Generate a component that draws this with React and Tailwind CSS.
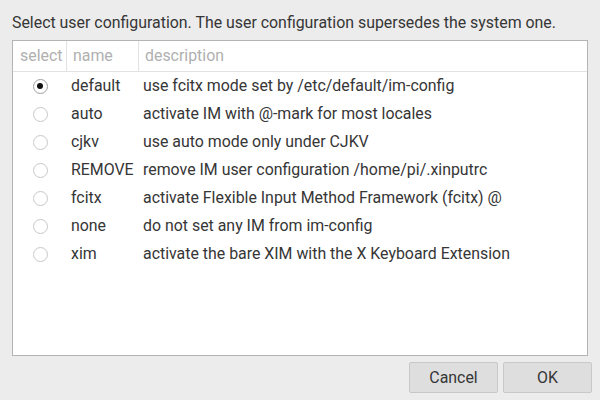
const rows = [
  { name: 'default', desc: 'use fcitx mode set by /etc/default/im-config', checked: true },
  { name: 'auto', desc: 'activate IM with @-mark for most locales' },
  { name: 'cjkv', desc: 'use auto mode only under CJKV' },
  { name: 'REMOVE', desc: 'remove IM user configuration /home/pi/.xinputrc' },
  { name: 'fcitx', desc: 'activate Flexible Input Method Framework (fcitx) @' },
  { name: 'none', desc: 'do not set any IM from im-config' },
  { name: 'xim', desc: 'activate the bare XIM with the X Keyboard Extension' }
];

const Radio = ({ checked }) => (
  <span
    className={`w-[15px] h-[15px] rounded-full bg-white border flex items-center justify-center ${
      checked ? 'border-[#a0a0a0]' : 'border-[#c8c8c8]'
    }`}
  >
    {checked && <span className="w-[6px] h-[6px] rounded-full bg-[#111]" />}
  </span>
);

const App = () => {
  return (
    <div
      className="w-[600px] h-[400px] bg-[#ececec] flex flex-col text-[15.9px] text-[#363636]"
      style={{ fontFamily: 'Roboto, "Liberation Sans", sans-serif' }}
    >
      <p className="pt-[13px] pl-[12px] leading-[20px] h-[40px] whitespace-nowrap">
        Select user configuration. The user configuration supersedes the system one.
      </p>

      <div className="ml-[12px] w-[576px] h-[316px] bg-white border border-[#b4b4b4] flex flex-col">
        <div className="flex h-[31px] border-b border-[#e2e2e2] text-[#b0b0b0] leading-[30px]">
          <div className="w-[54px] border-r border-[#e2e2e2] pl-[7px]">select</div>
          <div className="w-[72px] border-r border-[#e2e2e2] pl-[6px]">name</div>
          <div className="flex-1 pl-[6px]">description</div>
        </div>
        {rows.map(r => (
          <div key={r.name} className="flex h-[28px] items-center leading-[28px]">
            <div className="w-[54px] flex justify-center">
              <Radio checked={r.checked} />
            </div>
            <div className="w-[72px] pl-[4px] whitespace-nowrap">{r.name}</div>
            <div className="flex-1 pl-[4px] whitespace-nowrap">{r.desc}</div>
          </div>
        ))}
      </div>

      <div className="flex justify-end gap-[5px] pr-[8px] pt-[6px]">
        <button className="w-[89px] h-[31px] bg-[#dedede] border border-[#c8c8c8] rounded-[2px] text-[#363636]">
          Cancel
        </button>
        <button className="w-[89px] h-[31px] bg-[#dedede] border border-[#c8c8c8] rounded-[2px] text-[#363636]">
          OK
        </button>
      </div>
    </div>
  );
};

export default App;
